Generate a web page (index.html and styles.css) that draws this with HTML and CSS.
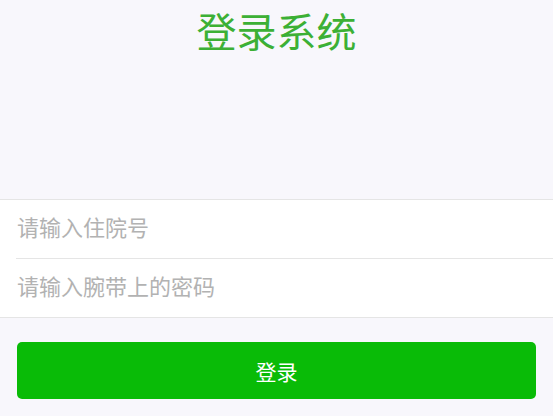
FILE: index.html
```html
<!DOCTYPE html>
<html lang="zh-CN">
<head>
  <meta charset="UTF-8">
  <title>登录系统</title>
  <meta name="viewport" content="width=device-width, initial-scale=1">
  <link rel="stylesheet" href="styles.css">
</head>
<body>

<!-- HEADER -->
<h1 class="page-title">登录系统</h1>

<form id="login-form">
  <div class="cells">
    <div class="cell">
      <input type="text" id="zyh" name="zyh" class="cell-input" placeholder="请输入住院号">
    </div>
    <div class="cell">
      <input type="password" id="mm" name="mm" class="cell-input" placeholder="请输入腕带上的密码">
    </div>
  </div>

  <div class="btn-area">
    <button type="submit" class="btn-primary">登录</button>
  </div>
</form>

</body>
</html>
```

FILE: styles.css
```css
body {
  margin: 0;
  font-family: "Noto Sans CJK SC", "Noto Sans", sans-serif;
  background-color: #f8f7fc;
}

.page-title {
  margin: 0;
  padding-top: 10px;
  height: 40px;
  line-height: 40px;
  font-size: 40px;
  font-weight: normal;
  text-align: center;
  color: #3cb035;
}

#login-form {
  margin-top: 149px;
}

.cells {
  background: white;
  border-top: 1px solid #e5e5e5;
  border-bottom: 1px solid #e5e5e5;
}

.cell {
  height: 52px;
  padding-bottom: 6px;
  margin-left: 16px;
  display: flex;
  align-items: center;
}

.cell + .cell {
  border-top: 1px solid #e5e5e5;
}

.cell-input {
  flex: 1;
  border: none;
  outline: none;
  background: transparent;
  padding: 0 1px;
  font-family: inherit;
  font-size: 22px;
  color: #333;
}

.cell-input::placeholder {
  color: #b2b2b2;
}

.btn-area {
  padding: 24px 17px 0 17px;
}

.btn-primary {
  display: block;
  width: 100%;
  height: 57px;
  background-color: #09bb07;
  color: white;
  font-family: inherit;
  font-size: 21px;
  border: none;
  border-radius: 5px;
  cursor: pointer;
}

.btn-primary:hover {
  background-color: #08a806;
}
```
